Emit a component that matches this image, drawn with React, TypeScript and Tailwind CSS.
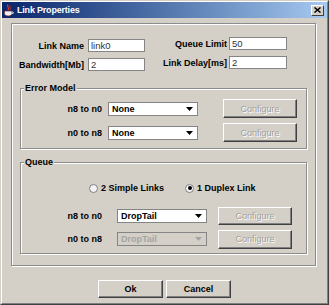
import React from 'react';

const GRAY = 'bg-[#d4d0c8]';

function TextField({ value, className = '' }: { value: string; className?: string }) {
    return (
        <div className={`h-[13px] bg-white border border-[#858585] pl-[2px] text-[9.5px] leading-[11px] text-[#333] ${className}`}>
            {value}
        </div>
    );
}

function Combo({ value, disabled = false }: { value: string; disabled?: boolean }) {
    return (
        <div
            className={`w-[90px] h-[14px] flex items-center justify-between border border-[#858585] ${
                disabled ? 'bg-[#d4d0c8] text-[#a4a4a4]' : 'bg-white text-black'
            }`}
        >
            <span className="pl-[3px] font-bold text-[9px] leading-[12px]">{value}</span>
            <svg width="7" height="4" className="mr-[4px]">
                <path d="M0 0H7L3.5 4Z" fill={disabled ? '#a4a4a4' : '#000'} />
            </svg>
        </div>
    );
}

function Button({ label, disabled = false, className = '' }: { label: string; disabled?: boolean; className?: string }) {
    return (
        <div
            className={`flex items-center justify-center ${GRAY} border border-t-white border-l-white border-b-[#404040] border-r-[#404040] shadow-[inset_-1px_-1px_0_#808080] text-[9px] leading-[10px] ${
                disabled ? 'text-[#a0a0a0] [text-shadow:1px_1px_0_#fff]' : 'text-black font-bold'
            } ${className}`}
        >
            {label}
        </div>
    );
}

function Group({ title, className = '', children }: { title: string; className?: string; children: React.ReactNode }) {
    return (
        <div className={`relative border border-[#8c8c8c] shadow-[inset_1px_1px_0_#fff,1px_1px_0_#fff] ${className}`}>
            <span className={`absolute left-[3px] top-[-6px] ${GRAY} px-[1px] font-bold text-[9px] leading-[10px]`}>{title}</span>
            {children}
        </div>
    );
}

function Radio({ label, checked = false, className = '' }: { label: string; checked?: boolean; className?: string }) {
    return (
        <div className={`flex items-center gap-[3px] ${className}`}>
            <div className="w-[9px] h-[9px] rounded-full bg-[#f4f4f4] border border-[#808080] flex items-center justify-center">
                {checked && <div className="w-[4px] h-[4px] rounded-full bg-black" />}
            </div>
            <span className="font-bold text-[9px] leading-[10px]">{label}</span>
        </div>
    );
}

function FormRow({ label, value, labelW, gap, fieldW }: { label: string; value: string; labelW: string; gap: string; fieldW: string }) {
    return (
        <div className={`flex items-center ${gap}`}>
            <span className={`${labelW} text-right font-bold text-[9px] leading-[10px]`}>{label}</span>
            <TextField value={value} className={fieldW} />
        </div>
    );
}

function JavaIcon() {
    return (
        <svg width="11" height="13" viewBox="0 0 11 13">
            <path d="M5 0.5C3 2.5 7 3.5 5 6" stroke="#e0301e" strokeWidth="1.3" fill="none" />
            <path d="M7.2 1.5C6 3 8 4 6.8 5.8" stroke="#e0301e" strokeWidth="1" fill="none" />
            <path d="M1.5 7H9V9.5C9 11 7.5 12 5.2 12C3 12 1.5 11 1.5 9.5Z" fill="#f2f2f2" stroke="#7a2030" strokeWidth="0.7" />
            <path d="M9 8H10.2V9.5H9" stroke="#f2f2f2" strokeWidth="0.8" fill="none" />
        </svg>
    );
}

export default function App() {
    return (
        <div className="w-[329px] h-[305px] font-['Liberation_Sans',Arial,sans-serif] text-black border border-t-[#d4d0c8] border-l-[#d4d0c8] border-b-[#404040] border-r-[#404040]">
            <div className={`w-full h-full flex flex-col ${GRAY} border border-t-white border-l-white border-b-[#808080] border-r-[#808080]`}>
                {/* title bar */}
                <div className="h-[16px] flex items-center bg-gradient-to-r from-[#0a246a] to-[#a6caf0]">
                    <div className="ml-[1px] w-[11px] flex justify-center">
                        <JavaIcon />
                    </div>
                    <span className="ml-[3px] font-bold text-[9px] leading-[10px] tracking-[-0.2px] text-white">Link Properties</span>
                    <div className={`ml-auto mr-[3px] w-[13px] h-[11px] flex items-center justify-center ${GRAY} border border-t-white border-l-white border-b-[#404040] border-r-[#404040]`}>
                        <svg width="7" height="6" viewBox="0 0 7 6">
                            <path d="M0.5 0.5L6.5 5.5M6.5 0.5L0.5 5.5" stroke="#000" strokeWidth="1.5" />
                        </svg>
                    </div>
                </div>

                {/* main panel */}
                <div className="ml-[9px] mt-[5px] w-[305px] h-[243px] border border-[#8c8c8c] shadow-[inset_1px_1px_0_#fff,1px_1px_0_#fff] flex flex-col">
                    <div className="flex items-start">
                        <div className="mt-[15px] flex flex-col gap-[6px]">
                            <FormRow label="Link Name" value="link0" labelW="w-[72px]" gap="gap-[4px]" fieldW="w-[57px]" />
                            <FormRow label="Bandwidth[Mb]" value="2" labelW="w-[72px]" gap="gap-[4px]" fieldW="w-[57px]" />
                        </div>
                        <div className="mt-[13px] flex flex-col gap-[6px]">
                            <FormRow label="Queue Limit" value="50" labelW="w-[82px]" gap="gap-[2px]" fieldW="w-[58px]" />
                            <FormRow label="Link Delay[ms]" value="2" labelW="w-[82px]" gap="gap-[2px]" fieldW="w-[58px]" />
                        </div>
                    </div>

                    <Group title="Error Model" className="ml-[8px] mt-[17px] w-[287px] h-[61px] pt-[10px] flex flex-col gap-[5px]">
                        {['n8 to n0', 'n0 to n8'].map((l) => (
                            <div key={l} className="flex items-center h-[19px]">
                                <span className="w-[81px] text-right font-bold text-[9px] leading-[10px]">{l}</span>
                                <div className="ml-[6px]">
                                    <Combo value="None" />
                                </div>
                                <Button label="Configure" disabled className="ml-[25px] w-[74px] h-[19px]" />
                            </div>
                        ))}
                    </Group>

                    <Group title="Queue" className="ml-[8px] mt-[13px] w-[287px] h-[92px] pt-[19px] flex flex-col">
                        <div className="flex items-center h-[12px] pl-[68px]">
                            <Radio label="2 Simple Links" className="w-[96px]" />
                            <Radio label="1 Duplex Link" checked />
                        </div>
                        <div className="flex items-center h-[18px] mt-[13px]">
                            <span className="w-[81px] text-right font-bold text-[9px] leading-[10px]">n8 to n0</span>
                            <div className="ml-[15px]">
                                <Combo value="DropTail" />
                            </div>
                            <Button label="Configure" disabled className="ml-[11px] w-[74px] h-[18px]" />
                        </div>
                        <div className="flex items-center h-[18px] mt-[5px]">
                            <span className="w-[81px] text-right font-bold text-[9px] leading-[10px]">n0 to n8</span>
                            <div className="ml-[15px]">
                                <Combo value="DropTail" disabled />
                            </div>
                            <Button label="Configure" disabled className="ml-[11px] w-[74px] h-[19px]" />
                        </div>
                    </Group>
                </div>

                {/* dialog buttons */}
                <div className="mt-[14px] flex justify-center gap-[3px]">
                    <Button label="Ok" className="w-[65px] h-[18px]" />
                    <Button label="Cancel" className="w-[65px] h-[18px]" />
                </div>
            </div>
        </div>
    );
}
